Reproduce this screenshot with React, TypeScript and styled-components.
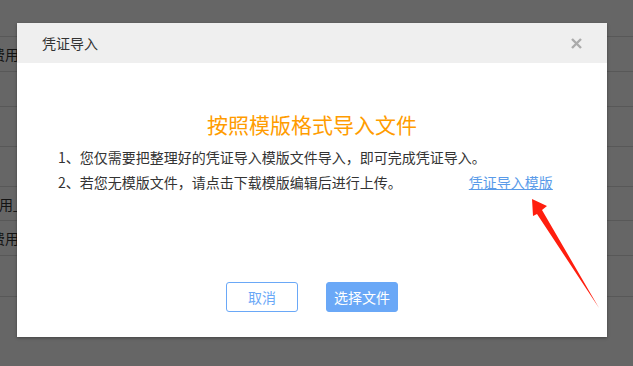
import styled, { createGlobalStyle } from "styled-components";

const GlobalStyle = createGlobalStyle`
  html, body {
    margin: 0;
    padding: 0;
    background: #ffffff;
    font-family: "Noto Sans CJK SC", "Noto Sans", sans-serif;
  }
`;

const Page = styled.div`
  position: relative;
  width: 633px;
  height: 366px;
  overflow: hidden;
  background: #fff;
`;

// the table behind the dim overlay
const Table = styled.div`
  display: flex;
  flex-direction: column;
`;

const Row = styled.div<{ $h: number }>`
  height: ${(p) => p.$h}px;
  border-bottom: 1px solid #dcdcdc;
  display: flex;
  align-items: center;
  font-size: 14px;
  color: #333;
  white-space: nowrap;
`;

const CellText = styled.span<{ $shift: number }>`
  margin-left: ${(p) => p.$shift}px;
`;

const Mask = styled.div`
  position: absolute;
  inset: 0;
  background: rgba(0, 0, 0, 0.6);
`;

const Dialog = styled.div`
  position: absolute;
  left: 17px;
  top: 23px;
  width: 590px;
  height: 314px;
  background: #fff;
  box-shadow: 0 1px 3px rgba(0, 0, 0, 0.35);
  display: flex;
  flex-direction: column;
`;

const Header = styled.div`
  height: 40px;
  background: #efefef;
  display: flex;
  align-items: center;
  justify-content: space-between;
  padding: 0 25px 0 25px;
  font-size: 14px;
  color: #333;
`;

const Close = styled.svg`
  width: 11px;
  height: 11px;
`;

const Body = styled.div`
  flex: 1;
  padding-top: 46px;
`;

const Heading = styled.div`
  text-align: center;
  font-size: 21px;
  line-height: 30px;
  color: #ff9c00;
`;

const Notes = styled.div`
  margin-top: 6px;
  padding-left: 41px;
  font-size: 14px;
  line-height: 25px;
  color: #333;
`;

const Line = styled.div`
  display: flex;
  white-space: nowrap;
`;

const TemplateLink = styled.a`
  margin-left: 67px;
  color: #5a9be9;
  text-decoration: underline;
  cursor: pointer;
`;

const Footer = styled.div`
  display: flex;
  justify-content: center;
  gap: 28px;
  padding-bottom: 25px;
`;

const Button = styled.button<{ $primary?: boolean }>`
  width: 72px;
  height: 30px;
  border-radius: 3px;
  border: 1px solid #6aa8f7;
  background: ${(p) => (p.$primary ? "#6aa8f7" : "#fff")};
  color: ${(p) => (p.$primary ? "#fff" : "#6aa8f7")};
  font-family: inherit;
  font-size: 14px;
  padding: 0;
  cursor: pointer;
`;

const Arrow = styled.svg`
  position: absolute;
  left: 0;
  top: 0;
  width: 633px;
  height: 366px;
  pointer-events: none;
`;

const rows = [
  { h: 36, text: "", shift: 0 },
  { h: 34, text: "费用报销", shift: -9 },
  { h: 34, text: "", shift: 0 },
  { h: 39, text: "", shift: 0 },
  { h: 39, text: "", shift: 0 },
  { h: 33, text: "用_费用", shift: -1 },
  { h: 34, text: "费用报销", shift: -9 },
  { h: 40, text: "", shift: 0 },
];

export default function App() {
  return (
    <Page>
      <GlobalStyle />
      <Table>
        {rows.map((r, i) => (
          <Row key={i} $h={r.h}>
            <CellText $shift={r.shift}>{r.text}</CellText>
          </Row>
        ))}
      </Table>
      <Mask />
      <Dialog>
        <Header>
          <span>凭证导入</span>
          <Close viewBox="0 0 11 11">
            <path d="M1 1 L10 10 M10 1 L1 10" stroke="#ababab" strokeWidth="2.4" strokeLinecap="butt" />
          </Close>
        </Header>
        <Body>
          <Heading>按照模版格式导入文件</Heading>
          <Notes>
            <Line>1、您仅需要把整理好的凭证导入模版文件导入，即可完成凭证导入。</Line>
            <Line>
              <span>2、若您无模版文件，请点击下载模版编辑后进行上传。</span>
              <TemplateLink>凭证导入模版</TemplateLink>
            </Line>
          </Notes>
        </Body>
        <Footer>
          <Button>取消</Button>
          <Button $primary>选择文件</Button>
        </Footer>
      </Dialog>
      <Arrow viewBox="0 0 633 366">
        <polygon
          points="532,199 547,206 542,210 599,308 537,214 533,216"
          fill="#ff1e0e"
        />
      </Arrow>
    </Page>
  );
}
